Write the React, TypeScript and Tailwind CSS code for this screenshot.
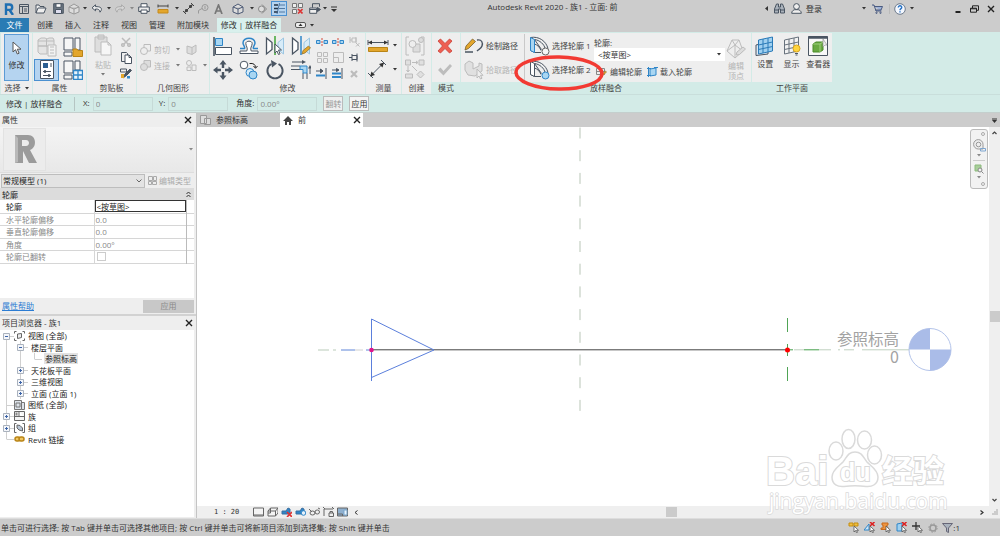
import type { ReactNode } from "react";

const INK = "#4a5562";
const OFF = "#bcbcbc";
const BLUE = "#2f86c8";
const SKY = "#a9d6f2";
const GOLD = "#e3a62c";

type SvgProps = { w: number; h: number; c?: string; sw?: number; children: ReactNode };

function Svg({ w, h, c = INK, sw = 1, children }: SvgProps) {
  return (
    <svg
      width={w}
      height={h}
      viewBox={`0 0 ${w} ${h}`}
      fill="none"
      stroke={c}
      strokeWidth={sw}
      className="shrink-0"
      aria-hidden="true"
    >
      {children}
    </svg>
  );
}

function Caret({ c = "#333" }: { c?: string }) {
  return (
    <Svg w={4} h={3} c="none">
      <path d="M0 0h4L2 2.6z" fill={c} />
    </Svg>
  );
}

function CloseMark() {
  return (
    <Svg w={8} h={8} c="#222" sw={1.4}>
      <path d="M1 1l6 6M7 1L1 7" />
    </Svg>
  );
}

function Cube({ c = INK }: { c?: string }) {
  return (
    <Svg w={12} h={12} c={c}>
      <path d="M1 4l5-3 5 3v5l-5 2-5-2zM1 4l5 2 5-2M6 6v5" fill="#ddd" />
    </Svg>
  );
}

const quickTools: { label: string; cell: string; icon: ReactNode; active?: boolean }[] = [
  {
    label: "Revit",
    cell: "w-4",
    icon: (
      <Svg w={10} h={12} c="#1f6fb2" sw={2.4}>
        <path d="M2 12V1.5h3.5a2.6 2.6 0 010 5.4H2M5.5 7L9 12" />
      </Svg>
    ),
  },
  {
    label: "主页",
    cell: "w-3.5",
    icon: (
      <Svg w={10} h={10}>
        <path d="M.5.5h9v9h-9zM.5 2.5h9M3.5 2.5v7M5 5h3M5 7h3" />
      </Svg>
    ),
  },
  {
    label: "打开",
    cell: "w-5",
    icon: (
      <Svg w={12} h={10}>
        <path d="M1 9V1h3l1 1.5h4V4M1 9l2-5h8L9 9z" fill="#eee" />
      </Svg>
    ),
  },
  {
    label: "保存",
    cell: "w-[15px]",
    icon: (
      <Svg w={11} h={11}>
        <path d="M.7.7h9.6v9.6H.7z" fill="#6b7682" />
        <path d="M3 .7h5v3.6H3z" fill="#fff" />
        <path d="M2.5 6.5h6v4h-6z" fill="#dde" />
      </Svg>
    ),
  },
  { label: "同步", cell: "w-4", icon: <Cube c="#999" /> },
  { label: "同步选项", cell: "w-1.5", icon: <Caret /> },
  {
    label: "放弃",
    cell: "w-[18px]",
    icon: (
      <Svg w={12} h={9}>
        <path d="M4.5.8L1 3.8l3.5 3V5c3 0 4 .5 4.5 3.2C12.5 4 9 2.4 4.5 2.6z" fill="#eee" />
      </Svg>
    ),
  },
  { label: "放弃列表", cell: "w-1.5", icon: <Caret /> },
  {
    label: "重做",
    cell: "w-4",
    icon: (
      <Svg w={12} h={9} c="#aaa">
        <path d="M7.5.8L11 3.8l-3.5 3V5C4.5 5 3.5 5.5 3 8.2-.5 4 3 2.4 7.5 2.6z" fill="#d5d5d5" />
      </Svg>
    ),
  },
  { label: "重做列表", cell: "w-2", icon: <Caret c="#888" /> },
  {
    label: "打印",
    cell: "w-4",
    icon: (
      <Svg w={12} h={11}>
        <path d="M3 4V.7h6V4" fill="#fff" />
        <path d="M.7 4h10.6v4.5H.7z" fill="#eee" />
        <path d="M3 7h6v3.3H3z" fill="#fff" />
      </Svg>
    ),
  },
  {
    label: "测量",
    cell: "w-[22px]",
    icon: (
      <Svg w={12} h={10} c="#444">
        <path d="M1 2h10M1 .5v3M11 .5v3" />
        <path d="M1 5.5h10V9H1z" fill={GOLD} stroke="#c58a1c" />
      </Svg>
    ),
  },
  { label: "测量列表", cell: "w-1.5", icon: <Caret /> },
  {
    label: "对齐尺寸标注",
    cell: "w-4",
    icon: (
      <Svg w={11} h={11} c="#444">
        <path d="M1 10l9-9M0 8l3 3M8 0l3 3" />
        <path d="M2 9l1-3 2 2zM9 2L8 5 6 3z" fill="#444" />
      </Svg>
    ),
  },
  {
    label: "按类别标记",
    cell: "w-3.5",
    icon: (
      <Svg w={11} h={10} c="#999">
        <circle cx="7" cy="3.5" r="3" />
        <path d="M7 2v3M4 4.5L.5 6.5v3" />
      </Svg>
    ),
  },
  {
    label: "文字",
    cell: "w-4",
    icon: (
      <Svg w={9} h={10} c="#777" sw={1.7}>
        <path d="M1 10l3.5-9L8 10M2.3 7h4.5" />
      </Svg>
    ),
  },
  { label: "默认三维视图", cell: "w-6", icon: <Cube c="#4d5a75" /> },
  { label: "三维视图列表", cell: "w-1", icon: <Caret /> },
  {
    label: "剖面",
    cell: "w-4",
    icon: (
      <Svg w={10} h={10} c="#888">
        <circle cx="4.5" cy="5" r="3" fill="#ddd" />
        <path d="M5 .5L9.5 5 5 9.5" />
      </Svg>
    ),
  },
  {
    label: "细线",
    cell: "ml-px w-4",
    active: true,
    icon: (
      <Svg w={12} h={11} c="#234">
        <path d="M1 2h4M1 5.5h4M1 9h4" strokeWidth="1.6" />
        <path d="M6 2h6M6 5.5h6M6 9h6M6.5 0L4 11" stroke="#37628f" strokeWidth=".8" />
      </Svg>
    ),
  },
  {
    label: "关闭非活动视图",
    cell: "w-[21px]",
    icon: (
      <Svg w={11} h={11} c="#777">
        <path d="M.5.5h4v4h-4zM6.5.5h4v4h-4zM.5 6.5h4v4h-4z" fill="#eee" />
        <path d="M6 6l4.5 4.5M10.5 6L6 10.5" stroke="#d33" strokeWidth="1.6" />
      </Svg>
    ),
  },
  {
    label: "切换窗口",
    cell: "w-3.5",
    icon: (
      <Svg w={12} h={11}>
        <path d="M3.5.7h7v3M3.5.7v4" />
        <path d="M.7 5h7v5.3h-7zM.7 6.5h7" fill="#eee" />
        <path d="M8.5 8.5l3-2-3-2z" fill={INK} />
      </Svg>
    ),
  },
  { label: "窗口列表", cell: "w-1.5", icon: <Caret /> },
  {
    label: "自定义快速访问工具栏",
    cell: "w-3",
    icon: (
      <Svg w={6} h={6} c="#333">
        <path d="M0 1h6" />
        <path d="M0 3h6L3 6z" fill="#333" stroke="none" />
      </Svg>
    ),
  },
];

function TitleBar() {
  return (
    <header className="flex h-[17px] items-center">
      <div className="flex h-full items-center pl-px">
        {quickTools.map((t) => (
          <button
            key={t.label}
            aria-label={t.label}
            className={`flex h-[15px] shrink-0 items-center justify-center ${t.cell} ${
              t.active ? "border border-[#4a90d0] bg-[#b5d3ef]" : ""
            }`}
          >
            {t.icon}
          </button>
        ))}
      </div>
      <h1 className="flex-1 pb-1 text-center text-[8px] text-[#333]">Autodesk Revit 2020 - 族1 - 立面: 前</h1>
      <div className="flex items-center gap-1 text-[8px] text-[#333]">
        <Svg w={3} h={5} c="none">
          <path d="M3 0v5L0 2.5z" fill="#333" />
        </Svg>
        <button aria-label="搜索" className="ml-0.5">
          <Svg w={11} h={11}>
            <path d="M2.5 1h2v3h2V1h2l2 5v4h-4V6h-2v4h-4V6z" fill="#aab2bb" />
            <path d="M.5 7h4M6.5 7h4" />
          </Svg>
        </button>
        <button className="ml-0.5 flex items-center gap-1">
          <Svg w={11} h={11}>
            <circle cx="5.5" cy="3.5" r="2.9" fill="#eee" />
            <path d="M.7 10.3c0-2.5 2-3.3 3-3.6h3.6c1 .3 3 1.100 3 3.6z" fill="#eee" />
          </Svg>
          登录
        </button>
        <button aria-label="登录选项" className="ml-9">
          <Caret />
        </button>
        <button aria-label="应用商店" className="ml-0.5 border-r border-[#bbb] pr-1.5">
          <Svg w={11} h={10} c="#4a5b80">
            <path d="M0 1h2l2 6h5.5M2.7 2.5H10.5L9 6H3.5" fill="#9fb2d8" />
            <circle cx="4.5" cy="8.8" r=".7" />
            <circle cx="8.5" cy="8.8" r=".7" />
          </Svg>
        </button>
        <button aria-label="帮助">
          <Svg w={12} h={12} c="#6c7a8c">
            <circle cx="6" cy="6" r="5.3" fill="#f4f8ff" />
            <path d="M4.3 4.6c0-2.6 3.6-2.2 3.4 0C7.6 5.6 6 5.7 6 7.2M6 8.2v1.4" stroke="#2672c4" strokeWidth="1.4" />
          </Svg>
        </button>
        <Caret />
      </div>
      <div className="ml-10 mr-[5px] flex items-center gap-2">
        <button aria-label="最小化">
          <Svg w={8} h={8} c="#222" sw={2}>
            <path d="M1.5 7h5" />
          </Svg>
        </button>
        <button aria-label="还原">
          <Svg w={9} h={8} c="#222">
            <path d="M2.5 3V.8h6v4.5H6.5" />
            <path d="M.5 3.2h6v4h-6zM.5 3.8h6" />
          </Svg>
        </button>
        <button aria-label="关闭">
          <CloseMark />
        </button>
      </div>
    </header>
  );
}

const tabs = ["创建", "插入", "注释", "视图", "管理", "附加模块"];

function TabRow() {
  return (
    <nav className="flex h-[15px] items-end text-[8px] leading-none text-[#333]">
      <button className="mr-2 flex h-[14px] w-[29px] items-center justify-center bg-[#2a7bb4] text-white">文件</button>
      {tabs.map((t) => (
        <button key={t} className="mr-3 flex h-[14px] items-center">
          {t}
        </button>
      ))}
      <button className="-ml-1 flex h-[14px] w-16 items-center justify-center bg-[#d9f0ed]">修改 | 放样融合</button>
      <button aria-label="最小化功能区" className="ml-3.5 flex h-[14px] items-center gap-1">
        <Svg w={11} h={6} c="#555">
          <rect x=".5" y=".5" width="10" height="5" rx="1.5" fill="#eee" />
          <path d="M3.5 4h4l-2-2.5z" fill="#333" stroke="none" />
        </Svg>
        <Caret />
      </button>
    </nav>
  );
}

type PanelProps = { title: ReactNode; size: string; mint?: boolean; children: ReactNode };

function Panel({ title, size, mint, children }: PanelProps) {
  return (
    <section className={`mr-px flex shrink-0 flex-col bg-[#eeeeee] ${size}`}>
      <div className="flex h-[50px] items-center">{children}</div>
      <h2 className={`flex h-3 items-center justify-center gap-1 text-[8px] text-[#444] ${mint ? "bg-[#d3ebe7]" : ""}`}>
        {title}
      </h2>
    </section>
  );
}

function Cell({ label, size, children }: { label: string; size: string; children: ReactNode }) {
  return (
    <button aria-label={label} className={`flex items-center justify-center ${size}`}>
      {children}
    </button>
  );
}

function Cursor() {
  return (
    <Svg w={10} h={14} c="#555">
      <path d="M1 1v10l2.5-2.3L5.3 13l1.800-.8-1.800-4H9z" fill="#fff" />
    </Svg>
  );
}

function ModifyPanel() {
  return (
    <Panel title="修改" size="w-[155px]">
      <div className="grid grid-cols-4">
        <Cell label="对齐" size="h-6 w-[26px]">
          <Svg w={20} h={19}>
            <path d="M1 0v19" strokeWidth="1.6" />
            <path d="M2.5 1.5h7v7h-7z" fill={SKY} stroke={BLUE} />
            <path d="M2.5 10.5h16v7h-16z" fill="#fff" />
          </Svg>
        </Cell>
        <Cell label="偏移" size="h-6 w-[26px]">
          <Svg w={20} h={18}>
            <path
              d="M1 11.500h4.500C6.500 10 4 8 4 6c0-3 3-4.800 6-4.800S16 3 16 6c0 2-2.500 4-1.500 5.500H19"
              stroke={BLUE}
              strokeWidth="1.5"
            />
            <path d="M1 16.5h18v-2.500H12.200c-1.500-3 1-5 1-7.500 0-1.500-1.500-2.300-3.200-2.300S6.800 5 6.800 6.500c0 2.500 2.500 4.500 1 7.500H1z" fill="#fff" />
          </Svg>
        </Cell>
        <Cell label="镜像 - 拾取轴" size="h-6 w-[26px]">
          <Svg w={20} h={20}>
            <path d="M1.5 2L7 6.5v7L1.5 18z" fill="#fff" strokeWidth="1.3" />
            <path d="M18.5 2L13 6.5v7l5.5 4.500z" fill="#d8ecf8" stroke="#9cc6e2" />
            <path d="M10 0v19" stroke="#3fa535" strokeWidth="1.5" />
            <path d="M10 8v9l2-2 1.5 3.5 1.500-.7L13.5 14h3z" fill="#fff" />
          </Svg>
        </Cell>
        <Cell label="镜像 - 绘制轴" size="h-6 w-[26px]">
          <Svg w={20} h={20}>
            <path d="M1.5 2L7 6.5v7L1.5 18z" fill="#fff" strokeWidth="1.3" />
            <path d="M18.5 2L13 6.5v7l5.5 4.500z" fill="#d8ecf8" stroke="#9cc6e2" />
            <path d="M10 0v19" stroke={BLUE} strokeWidth="1.5" />
            <path d="M11 18l1-3.5 5.500-4.500 2 2-5.500 5z" fill={GOLD} stroke="#8a6b25" strokeWidth=".7" />
          </Svg>
        </Cell>
        <Cell label="移动" size="h-[23px] w-[26px]">
          <Svg w={20} h={20} c="none">
            <path
              d="M10 0l3.500 4.500h-2.300V8H8.800V4.500H6.500zM10 20l3.500-4.500h-2.300V12H8.800v3.500H6.500zM0 10l4.500-3.500v2.300H8v2.400H4.500v2.300zM20 10l-4.500-3.500v2.300H12v2.400h3.500v2.300z"
              fill={INK}
            />
          </Svg>
        </Cell>
        <Cell label="复制" size="h-[23px] w-[26px]">
          <Svg w={20} h={20}>
            <circle cx="5" cy="5" r="3.8" fill="#fff" />
            <path d="M10.5 3.5c4-.5 6 1 6 4M14.5 6l2 2.300L18.500 6" stroke="#222" />
            <circle cx="11" cy="12.5" r="4" fill="#d6ebf8" stroke={BLUE} />
            <circle cx="14" cy="15" r="4" fill={SKY} stroke={BLUE} />
          </Svg>
        </Cell>
        <Cell label="旋转" size="h-[23px] w-[26px]">
          <Svg w={20} h={20}>
            <path d="M6.5 4a7.600 7.600 0 107 0" strokeWidth="1.9" />
            <path d="M6 0l6 3.500-5 4z" fill={INK} stroke="none" />
          </Svg>
        </Cell>
        <Cell label="修剪/延伸为角" size="h-[23px] w-[26px]">
          <Svg w={20} h={20}>
            <path d="M0 6h9M0 9.5h9M12 19v-6M16 19v-6" />
            <path d="M9 6h7v7h-4V9.5H9z" fill={SKY} stroke={BLUE} />
            <path d="M1 2h11M19 14V8" />
            <path d="M11 0l4 2-4 2zM17 8.500L19 5l2 3.500z" fill={INK} stroke="none" />
          </Svg>
        </Cell>
      </div>
      <div className="grid grid-cols-3">
        {["拆分图元", "用间隙拆分"].map((l) => (
          <Cell key={l} label={l} size="h-4 w-4">
            <Svg w={12} h={8} c={BLUE}>
              <path d="M.5 2.500H4v3H.5zM8 2.500h3.500v3H8z" fill={SKY} />
              <path d="M6 0v8" stroke="#d54a3a" strokeDasharray="2 1" />
            </Svg>
          </Cell>
        ))}
        <Cell label="解锁" size="h-4 w-4">
          <Svg w={11} h={11} c={OFF}>
            <path d="M1 1v6M1 4h2M3 2v4h4V2zM7 1v6M7 7l3.500 3.500M10.500 7L7 10.500" />
          </Svg>
        </Cell>
        <Cell label="阵列" size="h-4 w-4">
          <Svg w={11} h={11} c={OFF}>
            <path d="M.5.5h4v4h-4zM6.5.5h4v4h-4zM.5 6.5h4v4h-4zM6.5 6.5h4v4h-4z" />
          </Svg>
        </Cell>
        <Cell label="缩放" size="h-4 w-4">
          <Svg w={11} h={11} c={OFF}>
            <path d="M.5.5h10v10H.5zM.5 5.5h5v5" />
          </Svg>
        </Cell>
        <Cell label="锁定" size="h-4 w-4">
          <Svg w={10} h={9}>
            <path d="M0 4.500h3M3 1v7M3 2.500h5v4H3M8 .5v8" />
          </Svg>
        </Cell>
        <Cell label="修剪/延伸单个图元" size="h-4 w-4">
          <Svg w={12} h={11}>
            <path d="M10 0v11M0 3h6M4.500 1L7 3 4.500 5z" fill={INK} />
            <path d="M0 7.500h9" stroke={BLUE} strokeWidth="2" />
          </Svg>
        </Cell>
        <Cell label="修剪/延伸多个图元" size="h-4 w-4">
          <Svg w={12} h={11}>
            <path d="M10 0v11M0 2h6M4.500.5L7 2 4.500 3.500z" fill={INK} />
            <path d="M0 5.500h9M0 9h9" stroke={BLUE} strokeWidth="2" />
          </Svg>
        </Cell>
        <Cell label="删除" size="h-4 w-4">
          <Svg w={8} h={8} c={OFF} sw={2.2}>
            <path d="M1 1l6 6M7 1L1 7" />
          </Svg>
        </Cell>
      </div>
    </Panel>
  );
}

function ProfileIcon({ second }: { second?: boolean }) {
  return (
    <Svg w={21} h={20}>
      <path d="M1.5 1.500C10 0 17 5 19 12.500M5.500 3.500c5 .5 10 5 10.500 9M5.500 8c3 1 5 3 6.500 6.500M5.500 3.500l7 10M1.500 14.500l4 2H12" />
      <path d="M1.500 1.500l4 2v13l-4-2z" fill={second ? "#fff" : SKY} stroke={second ? INK : BLUE} />
      <circle cx="16.5" cy="15.5" r="3.5" fill={second ? SKY : "#f6f6f6"} stroke={second ? BLUE : "#666"} />
    </Svg>
  );
}

function PlaneGrid({ c, fill }: { c: string; fill: string }) {
  return <path d="M3.500 4l14-3v14l-14 3zM8 3v14M13 2v14M3.500 9l14-3M3.500 13.500l14-3" stroke={c} fill={fill} />;
}

function BlendPanel() {
  return (
    <Panel title="放样融合" size="w-[290px] relative" mint>
      <div className="ml-[3px] flex h-[47px] w-[59px] flex-col justify-between text-[8px]">
        <button className="flex h-6 items-center gap-0.5 whitespace-nowrap text-[#444]">
          <Svg w={20} h={16}>
            <path d="M1 14h8M13 2c5-1 6 3 5 6s-3 3-5 5" strokeWidth="1.4" />
            <path d="M1 12l1-4 6.500-7 3 2.500-7 7z" fill={GOLD} stroke="#77602c" strokeWidth=".8" />
          </Svg>
          绘制路径
        </button>
        <button className="flex h-[23px] items-center gap-0.5 whitespace-nowrap text-[#b4b4b4]">
          <Svg w={20} h={20} c={OFF}>
            <path d="M1 4l4-3 4 2v6l6-3V3l3 1v7l-7 5-7-1-3-5z" fill="#e0e0e0" />
            <path d="M13 9v9l2-2 1.500 3 1.500-.7-1.500-3H19z" fill="#eee" />
          </Svg>
          拾取路径
        </button>
      </div>
      <div className="ml-px flex h-[47px] w-[68px] flex-col justify-between border-l border-[#c9c9c9] pl-1 text-[8px] text-[#444]">
        <button className="flex h-6 items-center gap-0.5 whitespace-nowrap">
          <ProfileIcon />
          选择轮廓 1
        </button>
        <button className="flex h-[23px] items-center gap-0.5 whitespace-nowrap">
          <ProfileIcon second />
          选择轮廓 2
        </button>
      </div>
      <div className="ml-0.5 flex w-[131px] flex-col text-[8px] text-[#444]">
        <label htmlFor="profile" className="h-[11px] leading-[11px]">
          轮廓:
        </label>
        <div className="flex items-center bg-white pr-1">
          <select id="profile" className="h-[13px] flex-1 appearance-none border-0 bg-white pl-1 text-[#333]">
            <option>&lt;按草图&gt;</option>
          </select>
          <Caret />
        </div>
        <div className="mt-1 flex h-[13px] items-center whitespace-nowrap pl-0.5">
          <button className="flex items-center gap-[3px]">
            <Svg w={11} h={10} c="#888">
              <path d="M.5 1.5h8v6h-8zM.5 4.500h8M4.500 1.500v6" />
              <path d="M5 9.500l1-2.500 3.500-3 1 1-3.500 3.500z" fill={GOLD} stroke="#8a6b25" strokeWidth=".6" />
            </Svg>
            编辑轮廓
          </button>
          <button className="ml-[5px] flex items-center gap-0.5">
            <Svg w={11} h={10} c={BLUE}>
              <path d="M3 2l6-1v7l-6 1z" fill={SKY} />
              <path d="M0 1.500h4M7 .5h4M0 8.500h4M1.500 0v10" />
            </Svg>
            载入轮廓
          </button>
        </div>
      </div>
      <button className="ml-px flex w-5 flex-col items-center gap-0.5 pt-1 text-[8px] leading-[10px] text-[#b4b4b4]">
        <Svg w={20} h={20} c={OFF}>
          <path d="M6 1h7l4 11-8 7-8-7zM6 1l3 5 4-5M9 6L1 12M9 6l8 6M9 6v13" />
          <path d="M10 16l1-3 6-5 2.500 2-6 5.500z" fill="#ddd" />
        </Svg>
        <span>
          编辑
          <br />
          顶点
        </span>
      </button>
      {/* red marker drawn around the second profile button */}
      <svg width="94" height="44" viewBox="0 0 94 44" fill="none" className="absolute left-[51px] top-[18px] z-10" aria-hidden="true">
        <ellipse cx="47" cy="22" rx="43" ry="16" stroke="#f23a33" strokeWidth="3.5" transform="rotate(1 47 22)" />
      </svg>
    </Panel>
  );
}

function Ribbon() {
  return (
    <div className="flex h-[63px] border-b border-[#c9dedb] bg-[#d3ebe7] pl-px pt-px">
      <Panel
        size="w-[31px]"
        title={
          <>
            选择 <Caret />
          </>
        }
      >
        <button className="ml-[3px] flex h-[47px] w-[25px] flex-col items-center justify-center gap-1.5 border border-[#5b9bd5] bg-[#b5d4f0] pb-1.5 text-[8px] text-[#333]">
          <Cursor />
          修改
        </button>
      </Panel>
      <Panel title="属性" size="w-[53px]">
        <div className="ml-px grid grid-cols-[25px_27px]">
          <Cell label="族类别和族参数" size="h-6 w-[25px]">
            <Svg w={20} h={20} c={OFF}>
              <path d="M1 3l3-2h4l2 1 2-1h4l1 2v6H1zM1 9h9v8H3l-2-2zM9.500 2v8M1 4h16" fill="#e4e4e4" />
              <path d="M11 8h8v11h-8zM13 10h4M13 13h4M13 16h4" fill="#f2f2f2" />
            </Svg>
          </Cell>
          <Cell label="族类型" size="h-6 w-[27px]">
            <Svg w={20} h={20}>
              <path d="M1 1h9v12H1zM12 1h5v12h-5zM1 15h8v4H1z" fill="#f6f6f6" />
              <path d="M10 12h4l1 1.500h4.500v6H10z" fill={GOLD} stroke="#b98416" />
            </Svg>
          </Cell>
          <button aria-label="属性" className="flex h-[22px] w-[25px] items-center justify-center border border-[#4a90d0] bg-[#b5d4f0]">
            <Svg w={14} h={19}>
              <path d="M.5.5h13v18H.5z" fill="#fff" />
              <path d="M3 3h5v5H3z" fill="#2d5f92" stroke="none" />
              <path d="M10 4h2M10 6h2M3 11.500h8M3 15.500h8" />
              <path d="M5 10v3M9 14v3" strokeWidth="1.6" />
            </Svg>
          </button>
          <Cell label="类型属性" size="h-[22px] w-[27px]">
            <Svg w={20} h={20}>
              <path d="M1 1h9v12H1zM12 1h5v9h-5zM1 15h8v4H1z" fill="#f6f6f6" />
              <path d="M10.500 10.500h9v9h-9zM15 10.500v9M10.500 15h9" fill="#e8f4fc" stroke={BLUE} strokeWidth="1.3" />
            </Svg>
          </Cell>
        </div>
      </Panel>
      <Panel title="剪贴板" size="w-[49px]">
        <button className="ml-[7px] flex h-[47px] w-[18px] flex-col items-center text-[8px] text-[#b4b4b4]">
          <Svg w={18} h={22} c={OFF}>
            <path d="M1 3h12v15H1zM4 1h6v4H4z" fill="#dedede" />
            <path d="M7 8h7l3 3v10H7zM14 8v3h3" fill="#f6f6f6" />
          </Svg>
          <span className="my-1 leading-[9px]">粘贴</span>
          <Caret c="#777" />
        </button>
        <div className="ml-1.5 flex flex-col">
          <Cell label="剪切" size="h-4 w-4">
            <Svg w={10} h={10} c={OFF} sw={1.5}>
              <path d="M1 1l6 6M9 1L3 7" />
              <circle cx="2" cy="8" r="1.3" />
              <circle cx="8" cy="8" r="1.3" />
            </Svg>
          </Cell>
          <Cell label="复制到剪贴板" size="h-4 w-4">
            <Svg w={11} h={12}>
              <path d="M.5.5h5l1 1v8h-6z" fill="#eee" />
              <path d="M4 3h4l2.500 2.500v6H4zM8 3v2.500h2.500" fill="#fff" />
            </Svg>
          </Cell>
          <Cell label="匹配类型属性" size="h-4 w-4">
            <Svg w={12} h={11}>
              <path d="M.5 1h6v3h-6z" fill="#eee" />
              <path d="M3 10l2-4 5-5 1.500 1.500-5 5z" fill={INK} />
              <path d="M1 6h3v4H1z" fill={GOLD} stroke="none" />
              <path d="M7 8h3v2.500H7z" fill={BLUE} stroke="none" />
            </Svg>
          </Cell>
        </div>
      </Panel>
      <Panel title="几何图形" size="w-[72px]">
        <div className="ml-[3px] flex flex-col gap-1 text-[8px] text-[#b4b4b4]">
          {["剪切", "连接"].map((t) => (
            <div key={t} className="flex h-3 items-center">
              <button className="flex items-center gap-[3px]">
                <Svg w={11} h={11} c={OFF}>
                  <path d="M4 4V.5h6.500V7H7" fill={t === "连接" ? "#ddd" : "none"} />
                  <circle cx="4" cy="7" r="3.5" fill={t === "连接" ? "#ddd" : "#eee"} />
                </Svg>
                {t}
              </button>
              <span className="mx-1.5">
                <Caret c="#777" />
              </span>
              <button aria-label={`${t}选项`} className="flex items-center gap-1.5">
                {t === "剪切" ? (
                  <Svg w={11} h={11} c={OFF}>
                    <path d="M1 2l5 1.500L10 1v7l-4 2.500L1 9zM6 3.500v7" fill="#ddd" />
                  </Svg>
                ) : (
                  <>
                    <Svg w={11} h={11} c={OFF}>
                      <circle cx="3" cy="3" r="2.5" />
                      <path d="M1 7h4v3.500H1zM6 5h4v5.500H6z" />
                    </Svg>
                    <Caret c="#777" />
                  </>
                )}
              </button>
            </div>
          ))}
        </div>
      </Panel>
      <ModifyPanel />
      <Panel title="测量" size="w-[35px]">
        <div className="ml-px flex flex-col">
          <Cell label="测量距离" size="h-[23px] gap-1">
            <Svg w={22} h={14}>
              <path d="M1.500 3.500h19M1 1v5M21 1v5" />
              <path d="M1 3.500L5 1.500v4zM21 3.500l-4-2v4z" fill="#333" stroke="none" />
              <path d="M1.500 8.500h19v4h-19z" fill={GOLD} stroke="#b98416" />
            </Svg>
            <Caret />
          </Cell>
          <Cell label="尺寸标注" size="h-6 gap-1">
            <Svg w={22} h={20}>
              <path d="M3.500 17l13-13M1 14l5 5M14 1l5 5" />
              <path d="M3 17.500l1.500-5 3.500 3.500zM17 3.500l-5 1.500 3.500 3.500z" fill="#333" stroke="none" />
            </Svg>
            <Caret />
          </Cell>
        </div>
      </Panel>
      <Panel title="创建" size="w-[29px]">
        <div className="flex flex-col">
          <Cell label="创建组" size="h-[23px] w-[25px]">
            <Svg w={20} h={20} c={OFF}>
              <path d="M4 1H1v18h3M16 1h3v18h-3" />
              <path d="M8 8h7v8H8z" fill="#ddd" />
              <circle cx="7.500" cy="8" r="3.5" fill="#eee" />
              <circle cx="16" cy="4" r="2.5" fill="#ddd" />
            </Svg>
          </Cell>
          <Cell label="创建类似" size="h-6 w-[25px]">
            <Svg w={20} h={20} c={OFF}>
              <path d="M.5 1h5v5h-5zM14 1h5v5h-5zM7 3.500h5M11 2l2 1.500L11 5M3 7v5M1.500 11L3 13l1.500-2M7 7l5 5M.5 15h7v4h-7zM15.500 12l3.500 3.500-3.500 3.500-3.500-3.500z" fill="#e0e0e0" />
            </Svg>
          </Cell>
        </div>
      </Panel>
      <Panel title="模式" size="w-[28px]" mint>
        <div className="flex flex-col">
          <Cell label="取消编辑模式" size="h-[23px] w-[26px]">
            <Svg w={16} h={16} c="#c93f36" sw={0.8}>
              <path d="M1 3l2.500-2L8 5.500 12.500 1 15 3l-4.500 5L15 13l-2.500 2L8 10.500 3.500 15 1 13l4.500-5z" fill="#ee5f52" />
            </Svg>
          </Cell>
          <Cell label="完成编辑模式" size="h-6 w-[26px]">
            <Svg w={16} h={13} c="none">
              <path d="M1 7l2.500-2.500L6.500 8 13 1l2 2L6.500 12.500z" fill="#bdbdbd" />
            </Svg>
          </Cell>
        </div>
      </Panel>
      <BlendPanel />
      <Panel title="工作平面" size="w-20" mint>
        <div className="flex w-full justify-around self-start pt-[3px] text-[8px] text-[#444]">
          <button className="flex w-[25px] flex-col items-center gap-1">
            <Svg w={20} h={20}>
              <path d="M1 9l12-3v12L1 19.500z" fill="#dbeaf5" />
              <PlaneGrid c="#2b7bb8" fill="#9fd0f0" />
            </Svg>
            设置
          </button>
          <button className="flex w-[25px] flex-col items-center gap-1">
            <Svg w={20} h={20}>
              <PlaneGrid c="#68727d" fill="#f2f2f2" />
              <circle cx="15.5" cy="12.5" r="3.5" fill="#ffd53d" stroke="#d9a520" />
              <path d="M14 17.500h3M14.500 19h2" />
            </Svg>
            显示
          </button>
          <button className="flex w-[26px] flex-col items-center gap-1 whitespace-nowrap">
            <Svg w={20} h={20}>
              <path d="M.5.5h19v19H.5z" fill="#f8f8f8" />
              <path d="M.5 1.500h19" strokeWidth="2.5" />
              <path d="M5 8l3-2h7v8l-3 2H5z" fill="#69a942" stroke="#4b8a2a" />
              <path d="M5 8h7v8M12 8l3-2" stroke="#9fce7d" />
              <path d="M15 3v8l2-2h2z" fill="#eee" stroke="#999" strokeWidth=".7" />
            </Svg>
            查看器
          </button>
        </div>
      </Panel>
    </div>
  );
}

const offsets = [
  { id: "ox", label: "X:", value: "0", gap: "ml-2 gap-[3px]" },
  { id: "oy", label: "Y:", value: "0", gap: "ml-1.5 gap-[3px]" },
  { id: "oa", label: "角度:", value: "0.00°", gap: "ml-2 gap-[3px]" },
];

function OptionsBar() {
  return (
    <div className="flex h-[18px] items-center border-b border-[#c4cfcd] bg-[#d3ebe7] pl-1.5 text-[8px] text-[#333]">
      <span className="flex h-[14px] w-[69px] items-center border-r border-[#b5c5c3]">修改 | 放样融合</span>
      {offsets.map((o) => (
        <div key={o.id} className={`flex items-center ${o.gap}`}>
          <label htmlFor={o.id} className="pb-0.5">
            {o.label}
          </label>
          <input id={o.id} defaultValue={o.value} className="h-[14px] w-[60px] border border-[#c6dad7] bg-transparent pl-0.5 text-[#888]" />
        </div>
      ))}
      <button className="ml-1.5 h-[15px] w-5 border border-[#bbb] bg-[#efefef] text-[#999]">翻转</button>
      <button className="ml-1.5 h-[15px] w-5 border border-[#bbb] bg-[#f4f4f4]">应用</button>
    </div>
  );
}

const rows = [
  { name: "水平轮廓偏移", value: "0.0" },
  { name: "垂直轮廓偏移", value: "0.0" },
  { name: "角度", value: "0.00°" },
];

function Properties() {
  return (
    <section className="flex h-[203px] flex-col border-b-2 border-[#d2d2d2] bg-[#eeeeee] pr-0.5">
      <div className="flex h-[14px] items-center justify-between px-0.5 text-[8px] text-[#333]">
        <h2>属性</h2>
        <button aria-label="关闭属性">
          <CloseMark />
        </button>
      </div>
      <div className="flex h-[46px] items-center justify-between border-b border-[#ddd] bg-linear-to-b from-[#f4f4f4] to-[#e8e8e8] pl-[3px] pr-px">
        <div className="flex h-[43px] w-[43px] items-center justify-center border border-[#e2e2e2] bg-[#ececec]">
          <Svg w={28} h={32} c="none">
            <path d="M4 1h13c9 0 9 13 2 15l7 13h-8l-6-12v12H4z" fill="#9b9b9b" />
            <path d="M11 6h4c4 0 4 6 0 6h-4z" fill="#ececec" />
            <path d="M4 1l3 3v24l-3 1z" fill="#b9b9b9" />
          </Svg>
        </div>
        <Caret c="#888" />
      </div>
      <div className="flex h-[15px] items-center text-[8px]">
        <div className="ml-px flex h-[14px] w-[144px] items-center border border-[#bdbdbd] bg-[#e3e3e3] pr-0.5">
          <select aria-label="类型" className="h-3 flex-1 appearance-none bg-transparent pl-px text-[#222]">
            <option>常规模型 (1)</option>
          </select>
          <Svg w={6} h={4} c="#666">
            <path d="M.5.5L3 3 5.500.5" />
          </Svg>
        </div>
        <button className="ml-[3px] flex items-center gap-0.5 whitespace-nowrap text-[#aaa]">
          <Svg w={9} h={9} c="#aaa">
            <path d="M.5.5h4v4h-4zM5.500.5h3v4h-3zM.5 5.500h3v3h-3zM4.500 5.500h4v3h-4z" />
          </Svg>
          编辑类型
        </button>
      </div>
      <table className="w-full table-fixed border-collapse bg-white text-left text-[8px] leading-[11px] text-[#888]">
        <colgroup>
          <col className="w-[94px]" />
          <col />
          <col className="w-2" />
        </colgroup>
        <thead>
          <tr className="h-3 bg-[#dcdcdc] text-[#222]">
            <th colSpan={2} className="p-0 pl-0.5 font-normal">
              轮廓
            </th>
            <th className="p-0">
              <Svg w={5} h={6} c="#333">
                <path d="M.5 3L2.500 1l2 2M.5 6l2-2 2 2" />
              </Svg>
            </th>
          </tr>
        </thead>
        <tbody>
          <tr className="h-[13px] border-b border-[#d6d6d6] text-[#222]">
            <td className="border-r border-[#d6d6d6] p-0 pl-1.5">
              <label htmlFor="sketch">轮廓</label>
            </td>
            <td className="border-r border-[#bbb] p-0">
              <input id="sketch" defaultValue="<按草图>" className="block h-3 w-full border border-[#333] pl-px" />
            </td>
            <td className="p-0" />
          </tr>
          {rows.map((r) => (
            <tr key={r.name} className="border-b border-[#d6d6d6] odd:h-[13px] even:h-3">
              <td className="border-r border-[#d6d6d6] p-0 pl-1.5">{r.name}</td>
              <td className="border-r border-[#bbb] p-0 pl-px">{r.value}</td>
              <td className="p-0" />
            </tr>
          ))}
          <tr className="h-[13px] border-b border-[#d6d6d6]">
            <td className="border-r border-[#d6d6d6] p-0 pl-1.5">
              <label htmlFor="flipped">轮廓已翻转</label>
            </td>
            <td className="border-r border-[#bbb] p-0 pl-0.5">
              <input id="flipped" type="checkbox" className="block h-[9px] w-[9px] appearance-none border border-[#ccc] bg-white" />
            </td>
            <td className="p-0" />
          </tr>
        </tbody>
      </table>
      <div className="flex-1 bg-white" />
      <div className="flex h-4 items-center justify-between pl-0.5 text-[8px]">
        <a href="#help" className="text-[#2b7cd3] underline">
          属性帮助
        </a>
        <button className="h-[13px] w-[51px] bg-[#c8c8c8] text-[#8a8a8a]">应用</button>
      </div>
    </section>
  );
}

type Mark = "plus" | "minus" | "tee" | "elbow" | "line";

function Guide({ mark, first }: { mark: Mark; first?: boolean }) {
  const box = mark === "plus" || mark === "minus";
  return (
    <Svg w={14} h={12} c="#d0d0d0">
      {!first && <path d="M6.500 0v6" />}
      {mark !== "elbow" && <path d="M6.500 6v6" />}
      {mark !== "line" && <path d="M6.500 6.500H14" />}
      {box && <path d="M3.500 3.500h6v6h-6z" fill="#f4f6fa" stroke="#aab2bd" />}
      {box && <path d={mark === "plus" ? "M5 6.500h3M6.500 5v3" : "M5 6.500h3"} stroke="#3c64a8" />}
    </Svg>
  );
}

const sheetIcon = (
  <Svg w={11} h={10} c="#777">
    <path d="M.5.5h7v9h-7zM7.500 2.500h3v7h-3M2 3h4v4H2z" fill="#dde3ea" />
  </Svg>
);

const tree: { label: string; marks: Mark[]; first?: boolean; icon?: ReactNode; selected?: boolean }[] = [
  {
    label: "视图 (全部)",
    marks: ["minus"],
    first: true,
    icon: (
      <Svg w={11} h={10} c="#666">
        <path d="M2.500.5h-2v2M8.500.5h2v2M.5 7.500v2h2M10.500 7.500v2h-2" />
        <path d="M3.500 3l4-.5v4l-4 1z" fill="#eee" />
      </Svg>
    ),
  },
  { label: "楼层平面", marks: ["line", "minus"] },
  { label: "参照标高", marks: ["line", "line", "elbow"], selected: true },
  { label: "天花板平面", marks: ["line", "plus"] },
  { label: "三维视图", marks: ["line", "plus"] },
  { label: "立面 (立面 1)", marks: ["line", "plus"] },
  { label: "图纸 (全部)", marks: ["tee"], icon: sheetIcon },
  {
    label: "族",
    marks: ["plus"],
    icon: (
      <Svg w={11} h={10} c="#666">
        <path d="M.5.5h10v9H.5zM5 .5v5h5.500M1 5.500h4" fill="#f4f4f4" />
        <path d="M1.500 1.500h2v3h-2z" fill="#888" stroke="none" />
      </Svg>
    ),
  },
  {
    label: "组",
    marks: ["plus"],
    icon: (
      <Svg w={11} h={10} c="#666">
        <path d="M2.500.5h-2v9h2M8.500.5h2v9h-2" />
        <path d="M3 2l3 .5L8.500 5v3L5 7 3 5z" fill="#b9c6d6" />
      </Svg>
    ),
  },
  {
    label: "Revit 链接",
    marks: ["elbow"],
    icon: (
      <Svg w={11} h={6} c="#b98416" sw={1.5}>
        <rect x="1" y="1" width="5" height="4" rx="2" fill="#f0c560" />
        <rect x="5" y="1" width="5" height="4" rx="2" fill="#f0c560" />
      </Svg>
    ),
  },
];

function Browser() {
  return (
    <section className="flex flex-1 flex-col bg-[#eeeeee] pb-px pr-0.5">
      <div className="flex h-[14px] items-center justify-between pl-0.5 pr-px text-[8px] text-[#333]">
        <h2>项目浏览器 - 族1</h2>
        <button aria-label="关闭项目浏览器">
          <CloseMark />
        </button>
      </div>
      <ul className="flex-1 bg-white text-[8px] text-[#222]">
        {tree.map((n) => (
          <li key={n.label} className="flex items-center overflow-hidden odd:h-[11px] even:h-3">
            {n.marks.map((m, i) => (
              <Guide key={i} mark={m} first={n.first} />
            ))}
            {n.icon && <span className="mr-0.5">{n.icon}</span>}
            <span className={`whitespace-nowrap px-px leading-[11px] ${n.icon ? "" : "ml-0.5"} ${n.selected ? "bg-[#e2e2e2]" : ""}`}>
              {n.label}
            </span>
          </li>
        ))}
      </ul>
    </section>
  );
}

function Drawing() {
  return (
    <svg width="792" height="379" viewBox="197 127 792 379" fill="none" className="absolute left-0 top-0" aria-label="立面: 前">
      <path d="M580 127.500v287" stroke="#b9c6b7" strokeDasharray="11 11.7" />
      <path d="M318 350h11M333 350h3" stroke="#b9cbb9" />
      <path d="M341 350h14M366 350h5" stroke="#5f85d8" />
      <path d="M355 350h8" stroke="#d0d0d0" />
      <path d="M371.500 349.800h416" stroke="#444" />
      <path d="M371.500 381v-62l62.500 31-62.500 27.500" stroke="#5b7fdc" />
      <circle cx="371.500" cy="350" r="2.3" fill="#e0148c" />
      <path d="M787.500 318v14M787.500 344v12M787.500 367v14" stroke="#4fa455" />
      <path d="M790 349.800h3M804 349.800h15" stroke="#45a04c" />
      <path d="M794 349.800h10M819 349.800h12M838 349.800h2M844 349.800h10M862 349.800h47" stroke="#bfd0bf" />
      <circle cx="787.500" cy="350" r="2.5" fill="#f00" />
      <text x="837" y="345" fontSize="15.5" fill="#a2a2a2" className="font-['Noto_Sans_CJK_SC',sans-serif]">
        参照标高
      </text>
      <text x="890" y="363" fontSize="16" fill="#a2a2a2" className="font-['Noto_Sans_CJK_SC',sans-serif]">
        0
      </text>
      <circle cx="930" cy="349.500" r="21" stroke="#b4c4ea" />
      <path d="M930 349.500v-21a21 21 0 00-21 21zM930 349.500v21a21 21 0 0021-21z" fill="#aabce8" />
    </svg>
  );
}

function Watermark() {
  return (
    <svg width="184" height="94" viewBox="765 424 184 94" fill="#fff" stroke="#dadada" className="pointer-events-none absolute bottom-0 right-[51px]" aria-hidden="true">
      <g strokeWidth="1.5">
        <ellipse cx="836" cy="451" rx="7" ry="9" />
        <ellipse cx="848.500" cy="439" rx="6.5" ry="9.5" />
        <ellipse cx="864.500" cy="440" rx="7" ry="9" />
        <ellipse cx="874.500" cy="455" rx="7" ry="9" />
        <path d="M855 452c-7 0-8 5-12 10-4 4-11 8-11 15 0 8 6 10 12 9.500 6-.8 16-.8 22 0 6 .5 12-2 12-9.500 0-7-7-11-11-15-4-5-5-10-12-10z" />
      </g>
      <g strokeWidth="2" paintOrder="stroke" fontWeight="700">
        <text x="766" y="485" fontSize="40" className="font-['Liberation_Sans',sans-serif]">
          Bai
        </text>
        <text x="840" y="481" fontSize="25" className="font-['Liberation_Sans',sans-serif]">
          du
        </text>
        <text x="882" y="482" fontSize="31" className="font-['Noto_Sans_CJK_SC',sans-serif]">
          经验
        </text>
      </g>
      <text x="769" y="509" fontSize="21" strokeWidth="1.5" paintOrder="stroke" className="font-['Open_Sans',sans-serif]">
        jingyan.baidu.com
      </text>
    </svg>
  );
}

function NavBar() {
  return (
    <div className="absolute right-px top-0.5 flex h-[60px] w-[18px] flex-col items-center justify-between rounded-[3px] border border-[#bbb] bg-[#f2f2f2] py-0.5">
      <span className="mr-0.5 self-end">
        <Svg w={4} h={4} c="#aaa">
          <circle cx="2" cy="2" r="1.5" />
        </Svg>
      </span>
      <button aria-label="控制盘">
        <Svg w={13} h={13} c="#999">
          <path d="M10 10H5.500A4.700 4.700 0 1110 5.500z" fill="#eee" />
          <circle cx="5.500" cy="5.500" r="2.3" />
          <path d="M7.500 9.500h5v2.500h-5z" stroke="#7fa6d0" />
        </Svg>
      </button>
      <Caret c="#888" />
      <span className="h-px w-3 bg-[#ccc]" />
      <button aria-label="缩放">
        <Svg w={10} h={10} c="#888">
          <path d="M1 1h6v6H1z" fill="#a8cf9a" stroke="#8cba7c" />
          <circle cx="6" cy="6" r="2" fill="#f2f2f2" />
          <path d="M7.500 7.500L9.500 9.500" />
        </Svg>
      </button>
      <Caret c="#888" />
      <span className="mr-0.5 self-end">
        <Svg w={4} h={4} c="#aaa">
          <circle cx="2" cy="2" r="1.5" />
        </Svg>
      </span>
    </div>
  );
}

const viewTools: { label: string; icon: ReactNode }[] = [
  { label: "详细程度", icon: <path d="M.5 1h10v8H.5zM.5 8h10" fill="#f4f4f4" /> },
  { label: "视觉样式", icon: <path d="M1 4l2.500-3H11v5L8.500 9H1zM1 4h7.500v5M8.500 4L11 1M3.500 1v5H1" fill="#f4f4f4" /> },
  {
    label: "裁剪视图",
    icon: (
      <>
        <path d="M1 4h4l2-3 2 1v5H1z" fill={BLUE} stroke="#3b6fa0" />
        <path d="M6 5l5 5M11 5l-5 5" stroke="#d33" strokeWidth="1.6" />
      </>
    ),
  },
  {
    label: "显示裁剪区域",
    icon: (
      <>
        <path d="M1 4h4l2-3 2 1v5H1z" fill={BLUE} stroke="#3b6fa0" />
        <circle cx="8.500" cy="6" r="2.3" fill="#e4f1fb" stroke={BLUE} />
      </>
    ),
  },
  { label: "临时隐藏/隔离", icon: <path d="M0 2l3 3M1 6a2.500 2 0 015 0 2.500 2 0 01-5 0M6 5a2.200 2 0 014.500 0A2.200 2 0 016 5M9 1l2 1" /> },
  { label: "显示隐藏的图元", icon: <path d="M1 9V2h9M0 0l2 2M9 0l2 2M6 6h4.500v3.500H6zM7 6V4.500h2.500V6" /> },
  {
    label: "临时视图属性",
    icon: (
      <>
        <path d="M.5 1h10v8H.5zM.5 7h5v2" fill="#8fb0cf" />
        <path d="M7 3h3v5H7z" fill="#e8f4ff" stroke="#7aa7cc" />
      </>
    ),
  },
];

function View() {
  return (
    <main className="flex min-w-0 flex-1 flex-col border-l border-[#c4c4c4]">
      <div className="flex h-[14px] items-center text-[8px] text-[#333]">
        <button className="flex h-full w-[83px] items-center gap-[5px] bg-[#c6c6c6] pl-[3px]">
          <Svg w={11} h={10} c="#999">
            <path d="M.5.5h6v8h-6zM4.500 3.500h6v6h-6z" fill="#ddd" />
          </Svg>
          参照标高
        </button>
        <div className="flex h-full w-[83px] items-center bg-white pl-[3px]">
          <button className="flex flex-1 items-center gap-[5px]">
            <Svg w={10} h={9} c="none">
              <path d="M5 0l5 5H8v4H6V6H4v3H2V5H0z" fill="#444" />
            </Svg>
            前
          </button>
          <button aria-label="关闭视图" className="mr-0.5">
            <CloseMark />
          </button>
        </div>
        <button aria-label="视图列表" className="ml-auto mr-[3px]">
          <Svg w={5} h={5} c="#333">
            <path d="M0 1h5" />
            <path d="M0 2h5L2.500 5z" fill="#333" stroke="none" />
          </Svg>
        </button>
      </div>
      <div className="relative flex flex-1 flex-col">
        <div className="flex flex-1">
          <div className="relative flex-1 overflow-hidden bg-white">
            <Drawing />
            <NavBar />
          </div>
          <div className="flex w-[11px] flex-col items-center justify-between bg-[#efefef] py-1">
            <Svg w={5} h={4} c="#444" sw={1.2}>
              <path d="M.5 3l2-2 2 2" />
            </Svg>
            <span className="h-[11px] w-2.5 bg-[#cbcbcb]" />
            <Svg w={5} h={4} c="#444" sw={1.2}>
              <path d="M.5 1l2 2 2-2" />
            </Svg>
          </div>
        </div>
        <div className="flex h-3 items-center bg-[#efefef] pl-[17px] text-[#333]">
          <button className="mr-3.5 whitespace-pre font-['DejaVu_Sans_Mono',monospace] text-[7px]">1 : 20</button>
          <div className="flex gap-[3px]">
            {viewTools.map((t) => (
              <button key={t.label} aria-label={t.label} className="w-[11px]">
                <Svg w={11} h={10} c="#666">
                  {t.icon}
                </Svg>
              </button>
            ))}
          </div>
          <span className="ml-1.5">
            <Svg w={4} h={5} c="#333">
              <path d="M3.500.5l-2.500 2 2.500 2" />
            </Svg>
          </span>
          <div className="flex flex-1 justify-center pl-1">
            <span className="h-[10px] w-[11px] bg-[#cbcbcb]" />
          </div>
          <Svg w={4} h={5} c="#333" sw={1.2}>
            <path d="M.5.5l2.500 2-2.500 2" />
          </Svg>
          <span className="ml-2 mr-0.5">
            <Svg w={6} h={6} c="none">
              <path d="M4 0h2v6H0V4h2V2h2z" fill="#ccc" />
            </Svg>
          </span>
        </div>
        <Watermark />
      </div>
    </main>
  );
}

const statusTools: { label: string; icon: ReactNode }[] = [
  { label: "选择链接", icon: <path d="M1 1h4v3H1zM6 1h4v3H6z" fill="#f0c040" stroke="#c48d10" /> },
  {
    label: "选择基线图元",
    icon: (
      <>
        <path d="M0 8l5-6v6z" fill="#cfe5f7" stroke={BLUE} />
        <path d="M6 0l4.500 4M10.500 0L6 4" stroke="#d22" strokeWidth="1.6" />
      </>
    ),
  },
  { label: "选择锁定图元", icon: <path d="M2 1h6v2H7v3h1.500v1.500H1V6h2V3H2z" fill="#ee9440" stroke="#c86b1c" /> },
  {
    label: "按面选择图元",
    icon: (
      <>
        <path d="M1 2l5-1v8H1z" fill="#9fd0f0" stroke={BLUE} />
        <path d="M6 0l4.500 4M10.500 0L6 4" stroke="#d22" strokeWidth="1.6" />
      </>
    ),
  },
  { label: "选择时拖曳图元", icon: <path d="M4 0v8M0 4h8" stroke="#333" strokeWidth="1.3" /> },
];

function StatusBar() {
  return (
    <footer className="flex h-[17px] items-center justify-between bg-[#cccccc] pl-px text-[8px] text-[#333]">
      <p className="whitespace-nowrap">
        单击可进行选择; 按 Tab 键并单击可选择其他项目; 按 Ctrl 键并单击可将新项目添加到选择集; 按 Shift 键并单击
      </p>
      <div className="mr-10 flex items-center gap-1">
        {statusTools.map((t) => (
          <button key={t.label} aria-label={t.label}>
            <Svg w={12} h={11}>
              {t.icon}
              <path d="M6 4v6l1.500-1.500 1 2.300 1-.5-1-2h2z" fill="#fff" stroke="#555" strokeWidth=".8" />
            </Svg>
          </button>
        ))}
        <button aria-label="后台进程">
          <Svg w={10} h={10} c="#999" sw={1.5}>
            <circle cx="5" cy="5" r="3" />
            <circle cx="5" cy="5" r="4.2" strokeDasharray="1.5 1.8" strokeWidth="1" />
          </Svg>
        </button>
        <button className="flex items-center">
          <Svg w={11} h={10} c="#667">
            <path d="M.5.5h10L6.500 5v4.500l-2-1V5z" fill="#a9b2bd" />
          </Svg>
          :1
        </button>
      </div>
    </footer>
  );
}

export default function App() {
  return (
    <div className="flex h-screen flex-col overflow-hidden bg-[#cccccc] font-['Open_Sans','Noto_Sans_CJK_SC',sans-serif] leading-none">
      <TitleBar />
      <TabRow />
      <Ribbon />
      <OptionsBar />
      <div className="flex min-h-0 flex-1 border-b border-[#dddddd]">
        <aside className="flex w-[196px] shrink-0 flex-col">
          <Properties />
          <Browser />
        </aside>
        <View />
      </div>
      <StatusBar />
    </div>
  );
}
